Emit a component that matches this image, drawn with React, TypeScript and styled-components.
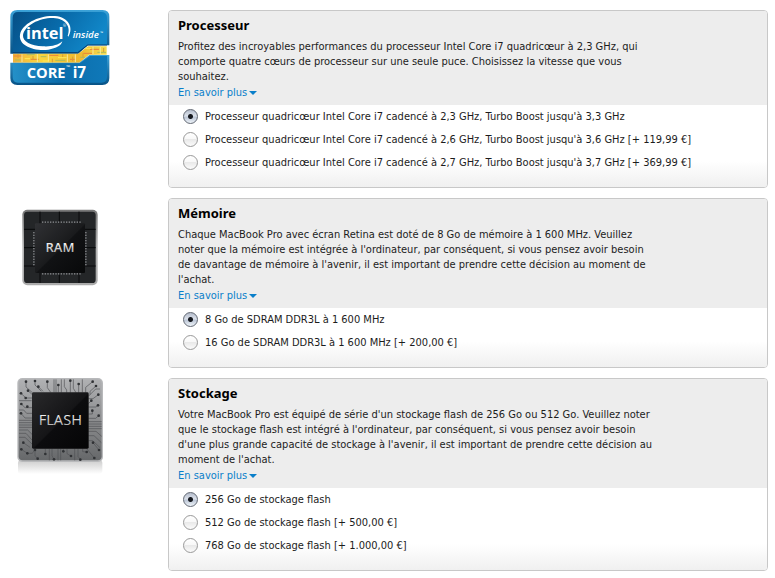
import React, { useState } from "react";
import styled, { createGlobalStyle } from "styled-components";

const GlobalStyle = createGlobalStyle`
  body {
    margin: 0;
    background: #fff;
    color: #1c1c1c;
    font: 11px/15px "DejaVu Sans Condensed", "Lucida Grande", sans-serif;
  }
`;

const Page = styled.main`
  display: flex;
  flex-direction: column;
  gap: 10px;
  padding: 10px 7px 7px 10px;
`;

const Section = styled.section`
  display: grid;
  grid-template-columns: 100px minmax(0, 1fr);
  column-gap: 58px;
  align-items: start;
`;

const Artwork = styled.svg`
  display: block;
  width: 100%;
`;

const Panel = styled.div`
  border: 1px solid #c8c8c8;
  border-radius: 4px;
  overflow: hidden;
`;

const PanelHeader = styled.header`
  padding: 5px 9px 4px;
  background: #ededed;
`;

const Title = styled.h2`
  margin: 0 0 5px;
  color: #000;
  font-family: "Noto Sans", "Lucida Grande", sans-serif;
  font-size: 13px;
  line-height: 18px;
  font-weight: 700;
`;

const Description = styled.p`
  margin: 0 0 1px;
`;

const MoreLink = styled.a`
  display: flex;
  align-items: center;
  gap: 2px;
  width: fit-content;
  color: #0a7fca;
  line-height: 16px;
  text-decoration: none;

  &::after {
    content: "";
    border: 4px solid transparent;
    border-top-color: currentColor;
    border-bottom: 0;
  }
`;

const Options = styled.fieldset`
  margin: 0;
  padding: 0 14px 13px;
  border: 0;
  background: linear-gradient(to top, #f0f0f0, #fff 26px);
`;

const Option = styled.label`
  display: flex;
  align-items: center;
  gap: 7px;
  height: 23px;
`;

const Radio = styled.input`
  appearance: none;
  box-sizing: border-box;
  flex: none;
  width: 15px;
  height: 15px;
  margin: 0;
  border: 1px solid #999;
  border-radius: 50%;
  background: linear-gradient(#fff, #f8f8f8 45%, #e9e9e9 50%, #fbfbfb);

  &:checked {
    border-color: #626873;
    background:
      radial-gradient(circle, #16191f 2px, transparent 3px),
      linear-gradient(#b4bccb, #dce2eb 45%, #bcc6d6 55%, #eef3f8);
  }
`;

function IntelBadge() {
  return (
    <Artwork viewBox="30 30 300 300" role="img" aria-label="Intel Core i7">
      <defs>
        <linearGradient id="badgeTop" x1="0" y1="0" x2="1" y2="0.3">
          <stop offset="0" stopColor="#064f86" />
          <stop offset="0.5" stopColor="#0869a8" />
          <stop offset="1" stopColor="#1187c8" />
        </linearGradient>
        <linearGradient id="badgeBottom" x1="0" y1="0" x2="1" y2="0">
          <stop offset="0" stopColor="#2490c8" />
          <stop offset="0.5" stopColor="#0b6cab" />
          <stop offset="1" stopColor="#0f79b9" />
        </linearGradient>
        <linearGradient id="badgeRim" x1="0" y1="0" x2="0" y2="1">
          <stop offset="0" stopColor="#3ba2d8" />
          <stop offset="1" stopColor="#075286" />
        </linearGradient>
        <linearGradient id="die" x1="0" y1="0" x2="1" y2="0">
          <stop offset="0" stopColor="#f0b13a" />
          <stop offset="0.3" stopColor="#f8d540" />
          <stop offset="0.7" stopColor="#eeb82e" />
          <stop offset="1" stopColor="#f5dc50" />
        </linearGradient>
      </defs>
      <path d="M52 30H308Q328 30 328 50V136H264L235 161H31V50Q31 30 52 30Z" fill="url(#badgeRim)" />
      <path d="M54 36H304Q321 36 321 53V135H263L233 158H38V53Q38 36 54 36Z" fill="url(#badgeTop)" />
      <path d="M39 161H235L264 139H320V164H267L238 188H39Z" fill="url(#die)" />
      <g strokeWidth="3" fill="none">
        <path d="M41 168H68M92 178H116M148 166H175M210 178H228M270 148H297M250 160H276" stroke="#e8813a" />
        <path d="M45 180H62M80 164H104M122 170H139M166 181H196M241 172H255M292 157H318" stroke="#a9bb62" />
        <path d="M66 163V186M112 162V186M145 163V185M202 163V187M226 163V186M279 140V162M301 141V163" stroke="#fae89b" />
        <path d="M54 163V174M99 168V180M157 176V187M188 163V172M218 170V184M249 160V172M311 144V156" stroke="#d69b38" />
        <path d="M74 176H90M128 183H146M174 173H200M256 145H274" stroke="#ffeb58" />
      </g>
      <path d="M31 188H238L268 165H328V234Q328 255 307 255H52Q31 255 31 234Z" fill="url(#badgeRim)" />
      <path d="M38 190H240L270 168H321V231Q321 248 304 248H54Q38 248 38 231Z" fill="url(#badgeBottom)" />
      <path d="M38 158H233L263 135H321" fill="none" stroke="#053f70" strokeWidth="3" />
      <path
        d="M205 110C222 84 206 51 165 48C119 45 66 70 60 104C55 135 98 154 145 149C169 145 184 137 187 124C174 136 151 141 128 139C93 137 67 125 69 105C74 76 119 53 160 54C196 56 214 80 203 107Z"
        fill="#fff"
      />
      <g fill="#fff" fontFamily="Open Sans, sans-serif">
        <text x="78" y="117" fontSize="49" fontWeight="700">intel</text>
        <text x="189" y="82" fontSize="11">®</text>
        <text x="218" y="114" fontSize="29" fontStyle="italic" fontWeight="600">inside</text>
        <text x="301" y="103" fontSize="11">™</text>
        <text x="80" y="235" fontSize="44" fontWeight="700">CORE</text>
        <text x="199" y="208" fontSize="15">™</text>
        <text x="218" y="235" fontSize="46" fontWeight="700">i7</text>
      </g>
    </Artwork>
  );
}

const pinOffsets = Array.from({ length: 15 }, (_, i) => 96 + i * 8);

function RamChip() {
  return (
    <Artwork viewBox="0 -6 300 300" role="img" aria-label="RAM">
      <defs>
        <linearGradient id="ramRim" x1="0" y1="0" x2="0" y2="1">
          <stop offset="0" stopColor="#777" />
          <stop offset="0.5" stopColor="#b6b6b6" />
          <stop offset="1" stopColor="#aaa" />
        </linearGradient>
        <linearGradient id="ramFace" x1="0" y1="0" x2="1" y2="1">
          <stop offset="0" stopColor="#303134" />
          <stop offset="0.5" stopColor="#1a1b1d" />
          <stop offset="0.52" stopColor="#111214" />
          <stop offset="1" stopColor="#08090a" />
        </linearGradient>
        <linearGradient id="metal" x1="0" y1="0" x2="0" y2="1">
          <stop offset="0.2" stopColor="#fff" />
          <stop offset="1" stopColor="#999" />
        </linearGradient>
      </defs>
      <rect x="37" y="29" width="226" height="227" rx="15" fill="url(#ramRim)" />
      <rect x="42" y="35" width="215" height="214" rx="10" fill="#242628" />
      <path d="M90 35V249M148 35V249M207 35V249M42 88H257M42 143H257M42 198H257" stroke="#08090a" strokeWidth="3" />
      <g fill="#75777a">
        {pinOffsets.map((p) => (
          <React.Fragment key={p}>
            <rect x={p} y="64" width="4" height="5" />
            <rect x={p} y="219" width="4" height="5" />
          </React.Fragment>
        ))}
        {pinOffsets.slice(0, 13).map((p) => (
          <React.Fragment key={p}>
            <rect x="69" y={p} width="5" height="4" />
            <rect x="225" y={p} width="5" height="4" />
          </React.Fragment>
        ))}
      </g>
      <rect x="75" y="70" width="150" height="149" rx="3" fill="url(#ramFace)" />
      <text x="150" y="155" textAnchor="middle" fontFamily="Open Sans, sans-serif" fontSize="39" fontWeight="600" fill="url(#metal)">
        RAM
      </text>
    </Artwork>
  );
}

const vias = [
  [48, 35], [75, 33], [85, 50], [112, 35], [145, 45], [181, 32], [206, 42], [248, 35], [258, 48],
  [33, 70], [54, 62], [47, 84], [34, 102], [52, 110], [33, 130], [265, 74], [244, 92], [264, 106],
  [247, 122], [266, 137], [40, 218], [34, 238], [52, 250], [75, 240], [83, 266], [106, 252],
  [132, 268], [160, 244], [183, 258], [211, 269], [230, 246], [253, 264], [267, 240], [249, 218],
];

function FlashChip() {
  return (
    <Artwork viewBox="0 24 300 300" role="img" aria-label="Flash">
      <defs>
        <linearGradient id="board" x1="0" y1="0" x2="0" y2="1">
          <stop offset="0" stopColor="#b0b1b3" />
          <stop offset="0.5" stopColor="#8c8d8f" />
          <stop offset="1" stopColor="#66686a" />
        </linearGradient>
        <linearGradient id="flashFace" x1="0" y1="0" x2="1" y2="1">
          <stop offset="0" stopColor="#29292b" />
          <stop offset="0.5" stopColor="#151517" />
          <stop offset="0.52" stopColor="#0c0c0e" />
          <stop offset="1" stopColor="#050506" />
        </linearGradient>
        <linearGradient id="flashLetters" x1="0" y1="0" x2="0" y2="1">
          <stop offset="0.2" stopColor="#fff" />
          <stop offset="1" stopColor="#999" />
        </linearGradient>
        <linearGradient id="reflection" x1="0" y1="0" x2="0" y2="1">
          <stop offset="0" stopColor="#ccc" />
          <stop offset="1" stopColor="#fff" />
        </linearGradient>
      </defs>
      <rect x="24" y="270" width="253" height="42" rx="10" fill="url(#reflection)" />
      <rect x="22" y="24" width="257" height="252" rx="15" fill="#b8b9bb" />
      <rect x="26" y="28" width="249" height="243" rx="12" fill="url(#board)" />
      <g fill="none" stroke="#505255" strokeWidth="2">
        <path d="M48 35V51L66 67M75 33V45L94 64M85 50L99 64M112 35V53L122 67M132 28V67M138 28V67M145 45V67M154 28V68M163 28V50L170 60V68M181 32V68M190 28V55L198 68M206 42V68M217 28V67M248 35L227 52V68M258 48L240 64V74M270 57H257L236 78" />
        <path d="M33 70L48 84H66M54 62L66 73M27 92H65M34 102L45 113H66M27 120H41L50 130H66M33 130L45 144H66M27 151H66M27 158H66M27 165H66M27 172H66M27 180H53L66 193M27 190H48L66 210M27 202H45L66 222M40 218L60 232" />
        <path d="M235 86H249L265 74M235 101L244 92M235 111H258L264 106M235 132H247V122M235 145H257L266 137M235 155H275M235 162H275M235 169H275M235 176H275M235 184H258L275 199M235 197H252L274 218M235 212H248L270 233" />
        <path d="M34 238L52 250H67L76 236M75 240V257L83 266M106 252V236M118 236V271M126 236V257L132 268M144 236V271M152 236V271M160 244V236M171 236V251L183 258M194 236V271M204 236V260L211 267M218 236V245L230 246M230 236L253 264M249 218L267 240" />
      </g>
      <g fill="#303235">
        {vias.map(([x, y]) => <circle key={`${x}-${y}`} cx={x} cy={y} r="4" />)}
      </g>
      <rect x="66" y="67" width="170" height="169" rx="4" fill="url(#flashFace)" />
      <text x="151" y="165" textAnchor="middle" fontFamily="Open Sans, sans-serif" fontSize="44" fontWeight="500" fill="url(#flashLetters)">
        FLASH
      </text>
    </Artwork>
  );
}

const sections = [
  {
    id: "processeur",
    title: "Processeur",
    Art: IntelBadge,
    lines: [
      "Profitez des incroyables performances du processeur Intel Core i7 quadricœur à 2,3 GHz, qui",
      "comporte quatre cœurs de processeur sur une seule puce. Choisissez la vitesse que vous",
      "souhaitez.",
    ],
    options: [
      "Processeur quadricœur Intel Core i7 cadencé à 2,3 GHz, Turbo Boost jusqu'à 3,3 GHz",
      "Processeur quadricœur Intel Core i7 cadencé à 2,6 GHz, Turbo Boost jusqu'à 3,6 GHz [+ 119,99 €]",
      "Processeur quadricœur Intel Core i7 cadencé à 2,7 GHz, Turbo Boost jusqu'à 3,7 GHz [+ 369,99 €]",
    ],
  },
  {
    id: "memoire",
    title: "Mémoire",
    Art: RamChip,
    lines: [
      "Chaque MacBook Pro avec écran Retina est doté de 8 Go de mémoire à 1 600 MHz. Veuillez",
      "noter que la mémoire est intégrée à l'ordinateur, par conséquent, si vous pensez avoir besoin",
      "de davantage de mémoire à l'avenir, il est important de prendre cette décision au moment de",
      "l'achat.",
    ],
    options: ["8 Go de SDRAM DDR3L à 1 600 MHz", "16 Go de SDRAM DDR3L à 1 600 MHz [+ 200,00 €]"],
  },
  {
    id: "stockage",
    title: "Stockage",
    Art: FlashChip,
    lines: [
      "Votre MacBook Pro est équipé de série d'un stockage flash de 256 Go ou 512 Go. Veuillez noter",
      "que le stockage flash est intégré à l'ordinateur, par conséquent, si vous pensez avoir besoin",
      "d'une plus grande capacité de stockage à l'avenir, il est important de prendre cette décision au",
      "moment de l'achat.",
    ],
    options: [
      "256 Go de stockage flash",
      "512 Go de stockage flash [+ 500,00 €]",
      "768 Go de stockage flash [+ 1.000,00 €]",
    ],
  },
];

function ConfigSection({ id, title, Art, lines, options }: (typeof sections)[number]) {
  const [selected, setSelected] = useState(0);
  return (
    <Section id={id}>
      <Art />
      <Panel>
        <PanelHeader>
          <Title id={`${id}-title`}>{title}</Title>
          <Description>
            {lines.map((line, i) => (
              <React.Fragment key={line}>
                {i > 0 && <br />}
                {line}
              </React.Fragment>
            ))}
          </Description>
          <MoreLink href={`#${id}`}>En savoir plus</MoreLink>
        </PanelHeader>
        <Options aria-labelledby={`${id}-title`}>
          {options.map((label, i) => (
            <Option key={label}>
              <Radio type="radio" name={id} checked={selected === i} onChange={() => setSelected(i)} />
              {label}
            </Option>
          ))}
        </Options>
      </Panel>
    </Section>
  );
}

export default function App() {
  return (
    <>
      <GlobalStyle />
      <Page>
        {sections.map((section) => (
          <ConfigSection key={section.id} {...section} />
        ))}
      </Page>
    </>
  );
}
